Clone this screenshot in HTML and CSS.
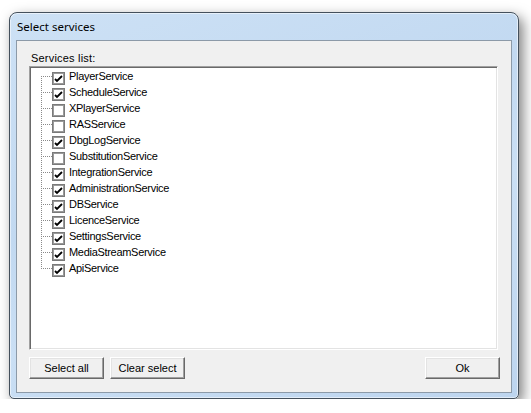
FILE: index.html
```html
<!DOCTYPE html>
<html>
<head>
<meta charset="utf-8">
<link rel="stylesheet" href="styles.css">
</head>
<body>
<div class="window">
  <div class="titlebar">Select services</div>
  <div class="client">
    <div class="label">Services list:</div>
    <div class="listbox">
      <div class="row first"><span class="branch"></span><span class="cb on"><svg viewBox="0 0 9 9" width="9" height="9"><path d="M1 4 L3 6 L8 1" fill="none" stroke="#000" stroke-width="1.8"/></svg></span><span class="txt">PlayerService</span></div>
      <div class="row"><span class="branch"></span><span class="cb on"><svg viewBox="0 0 9 9" width="9" height="9"><path d="M1 4 L3 6 L8 1" fill="none" stroke="#000" stroke-width="1.8"/></svg></span><span class="txt">ScheduleService</span></div>
      <div class="row"><span class="branch"></span><span class="cb"></span><span class="txt">XPlayerService</span></div>
      <div class="row"><span class="branch"></span><span class="cb"></span><span class="txt">RASService</span></div>
      <div class="row"><span class="branch"></span><span class="cb on"><svg viewBox="0 0 9 9" width="9" height="9"><path d="M1 4 L3 6 L8 1" fill="none" stroke="#000" stroke-width="1.8"/></svg></span><span class="txt">DbgLogService</span></div>
      <div class="row"><span class="branch"></span><span class="cb"></span><span class="txt">SubstitutionService</span></div>
      <div class="row"><span class="branch"></span><span class="cb on"><svg viewBox="0 0 9 9" width="9" height="9"><path d="M1 4 L3 6 L8 1" fill="none" stroke="#000" stroke-width="1.8"/></svg></span><span class="txt">IntegrationService</span></div>
      <div class="row"><span class="branch"></span><span class="cb on"><svg viewBox="0 0 9 9" width="9" height="9"><path d="M1 4 L3 6 L8 1" fill="none" stroke="#000" stroke-width="1.8"/></svg></span><span class="txt">AdministrationService</span></div>
      <div class="row"><span class="branch"></span><span class="cb on"><svg viewBox="0 0 9 9" width="9" height="9"><path d="M1 4 L3 6 L8 1" fill="none" stroke="#000" stroke-width="1.8"/></svg></span><span class="txt">DBService</span></div>
      <div class="row"><span class="branch"></span><span class="cb on"><svg viewBox="0 0 9 9" width="9" height="9"><path d="M1 4 L3 6 L8 1" fill="none" stroke="#000" stroke-width="1.8"/></svg></span><span class="txt">LicenceService</span></div>
      <div class="row"><span class="branch"></span><span class="cb on"><svg viewBox="0 0 9 9" width="9" height="9"><path d="M1 4 L3 6 L8 1" fill="none" stroke="#000" stroke-width="1.8"/></svg></span><span class="txt">SettingsService</span></div>
      <div class="row"><span class="branch"></span><span class="cb on"><svg viewBox="0 0 9 9" width="9" height="9"><path d="M1 4 L3 6 L8 1" fill="none" stroke="#000" stroke-width="1.8"/></svg></span><span class="txt">MediaStreamService</span></div>
      <div class="row last"><span class="branch"></span><span class="cb on"><svg viewBox="0 0 9 9" width="9" height="9"><path d="M1 4 L3 6 L8 1" fill="none" stroke="#000" stroke-width="1.8"/></svg></span><span class="txt">ApiService</span></div>
    </div>
    <div class="buttons">
      <button class="btn">Select all</button>
      <button class="btn">Clear select</button>
      <span class="spacer"></span>
      <button class="btn ok">Ok</button>
    </div>
  </div>
</div>
</body>
</html>
```
FILE: styles.css
```css
html, body {
  margin: 0;
  padding: 0;
  background: #ffffff;
}
body {
  padding: 12px 0 0 9px;
}
.window {
  box-sizing: border-box;
  width: 510px;
  height: 387px;
  border: 1px solid #44505c;
  border-radius: 8px 8px 5px 5px;
  background: linear-gradient(160deg, #cde1f5 0%, #c2d9f1 40%, #cadff4 60%, #bdd5ef 100%);
  box-shadow: 4px 5px 13px rgba(0,0,0,0.5), inset 0 0 0 1px rgba(255,255,255,0.55);
  padding: 0 6px 5px 6px;
  display: flex;
  flex-direction: column;
}
.titlebar {
  height: 27px;
  line-height: 27px;
  padding-left: 1px;
  font-family: "Noto Sans", "Open Sans", sans-serif;
  font-size: 11.5px;
  color: #000;
}
.client {
  flex: 1;
  border: 1px solid #8c9aa8;
  background: #f0f0f0;
  padding: 11px 13px 13px 12px;
  display: flex;
  flex-direction: column;
  font-family: "Liberation Sans", Arial, sans-serif;
  font-size: 11px;
  color: #000;
}
.label {
  height: 14px;
  line-height: 13px;
  padding-left: 2px;
  letter-spacing: 0.2px;
}
.listbox {
  box-sizing: border-box;
  height: 284px;
  background: #fff;
  border-top: 1px solid #a0a0a0;
  border-left: 1px solid #a0a0a0;
  border-right: 1px solid #ffffff;
  border-bottom: 1px solid #ffffff;
  box-shadow: inset 1px 1px 0 #696969, inset -1px -1px 0 #e3e3e3;
  padding: 1px 0 0 11px;
}
.row {
  height: 16px;
  display: flex;
  align-items: flex-start;
}
.branch {
  position: relative;
  width: 11px;
  height: 16px;
  flex: none;
}
.branch::before {
  content: "";
  position: absolute;
  left: 0;
  top: 0;
  width: 1px;
  height: 16px;
  background: repeating-linear-gradient(to bottom, #8a8a8a 0 1px, transparent 1px 2px);
}
.row.first .branch::before {
  top: 8px;
  height: 8px;
}
.row.last .branch::before {
  height: 9px;
}
.branch::after {
  content: "";
  position: absolute;
  left: 1px;
  top: 8px;
  width: 10px;
  height: 1px;
  background: repeating-linear-gradient(to right, transparent 0 1px, #8a8a8a 1px 2px);
}
.cb {
  box-sizing: border-box;
  width: 13px;
  height: 13px;
  margin-top: 4px;
  border: 1px solid #7a7a7a;
  box-shadow: inset 0 0 0 1px #9a9a9a;
  background: #fff;
  flex: none;
  display: flex;
  align-items: center;
  justify-content: center;
}
.cb svg {
  display: block;
  margin-top: 1px;
}
.txt {
  margin-left: 4px;
  line-height: 16px;
  white-space: nowrap;
  letter-spacing: -0.3px;
}
.buttons {
  margin-top: 7px;
  display: flex;
  gap: 6px;
}
.spacer {
  flex: 1;
}
.btn {
  box-sizing: border-box;
  width: 75px;
  height: 22px;
  margin: 0;
  padding: 0;
  background: #f0f0f0;
  font-family: "Liberation Sans", Arial, sans-serif;
  font-size: 11px;
  color: #000;
  border-top: 1px solid #ffffff;
  border-left: 1px solid #ffffff;
  border-right: 1px solid #696969;
  border-bottom: 1px solid #696969;
  box-shadow: inset -1px -1px 0 #a0a0a0, inset 1px 1px 0 #e3e3e3;
  border-radius: 0;
}
.btn.ok {
  margin-right: -2px;
}
```
